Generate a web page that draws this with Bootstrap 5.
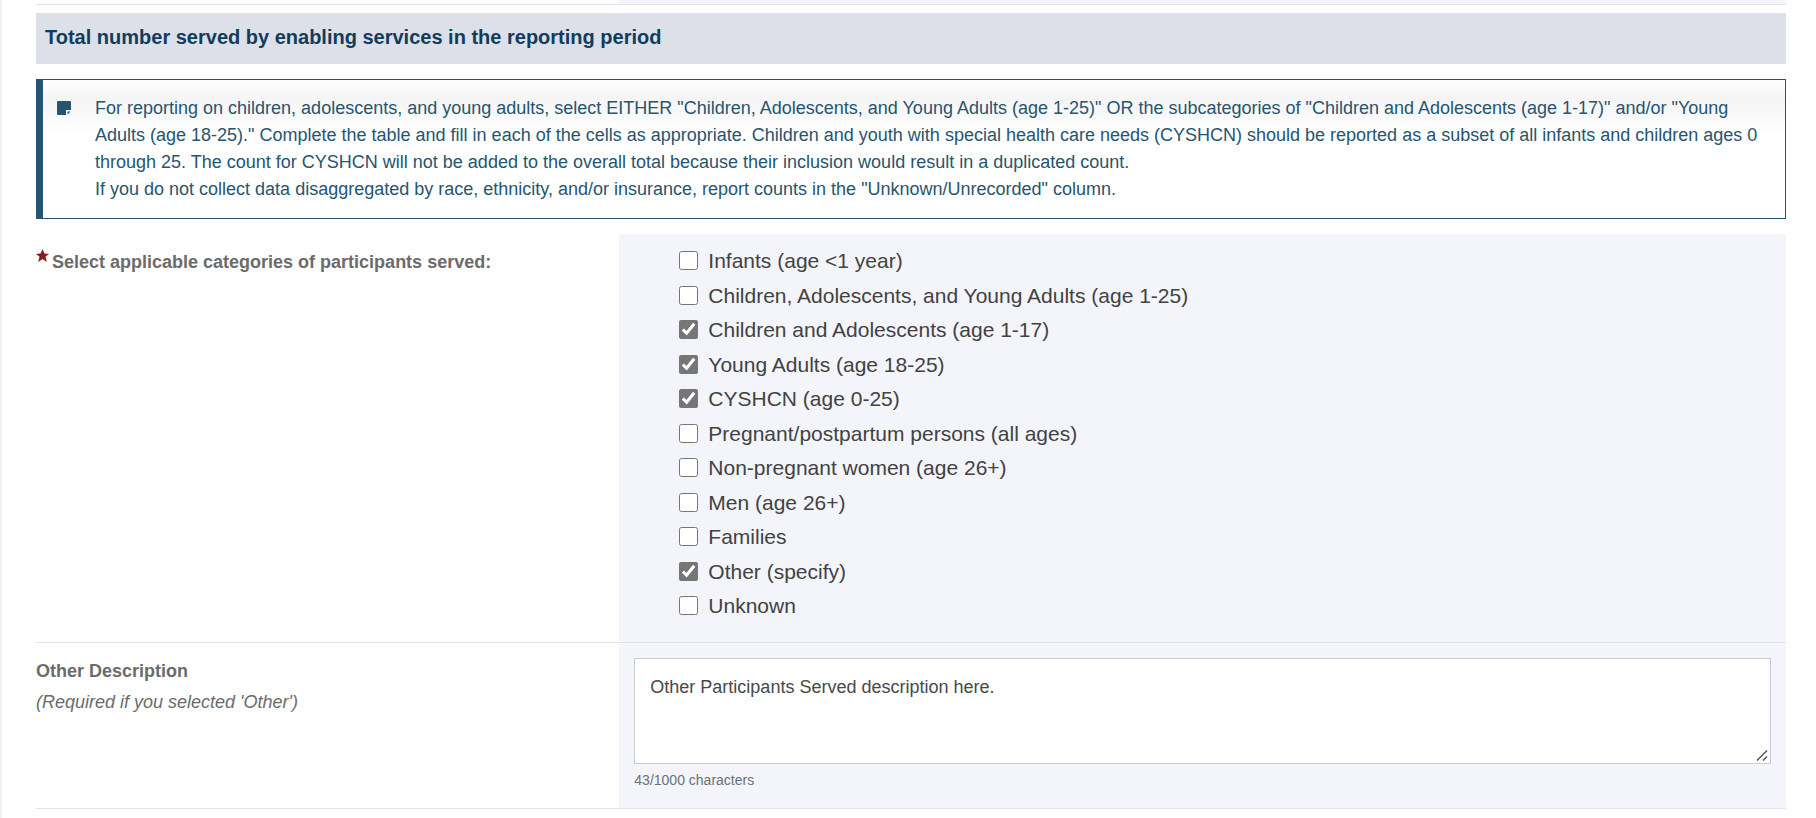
<!DOCTYPE html>
<html lang="en">
<head>
<meta charset="utf-8">
<meta name="viewport" content="width=device-width, initial-scale=1">
<title>Enabling services report</title>
<link href="https://cdn.jsdelivr.net/npm/bootstrap@5.3.0/dist/css/bootstrap.min.css" rel="stylesheet">
<style>
  body { font-family: "Liberation Sans", Arial, sans-serif; font-size: 18px; color: #6b6b6b; background: #fff; }
  .page-frame { border-left: 2px solid #edf1f7; min-height: 100vh; padding: 0 30px 0 34px; }
  .form-row { border-bottom: 1px solid #e2e3e5; }
  .field-cell { background: #f4f5fa; }
  .stub-row { height: 5px; }
  .section-title { background: #dde0e9; color: #103d5c; font-size: 20px; font-weight: 700; line-height: 27px; padding: 11px 9px 13px; margin: 8px 0 15px; }
  .note-box { border: 1px solid #26556f; border-left-width: 7px; color: #26556f; line-height: 27px; padding: 15px 24px 15px 14px; margin-bottom: 15px; background: linear-gradient(#fff, #f5f5f5 18px, #f8f8f8 32px, #fff 54px); }
  .note-icon { margin: 6px 24px 0 0; }
  .label-cell { padding-top: 15px; }
  .field-label { font-weight: 700; line-height: 27px; }
  .required-star { margin-right: 3px; }
  .choices { font-size: 21px; line-height: 1.5; color: #424242; padding: 11px 15px 17px 60px; }
  .choice { gap: 10px; margin-bottom: 3px; }
  .choice input { width: 19px; height: 19px; accent-color: #767676; margin: 0; }
  .desc-cell { padding: 15px 15px 18px; }
  .desc-box { height: 106px; border: 1px solid #c9ccd1; border-radius: 0; padding: 15px; line-height: 27px; font-size: 18px; color: #484848; }
  .desc-box::-webkit-resizer { background: #fff url("data:image/svg+xml,%3Csvg xmlns='http://www.w3.org/2000/svg' width='15' height='15'%3E%3Cpath d='M2 12.500L12 2.500M8 12.500L12 8.500' stroke='%23555' stroke-width='1.500'/%3E%3C/svg%3E") no-repeat right bottom; }
  .char-count { font-size: 14px; line-height: 20px; color: #6b7078; margin-top: 6px; }
</style>
</head>
<body>
<main class="page-frame">
  <div class="row g-0 form-row stub-row"><div class="col-4"></div><div class="col-8 field-cell"></div></div>
  <h2 class="section-title">Total number served by enabling services in the reporting period</h2>
  <div class="note-box d-flex align-items-start">
    <svg class="note-icon flex-shrink-0" width="14" height="14" viewBox="0 0 14 14" aria-hidden="true"><path fill="#26556f" d="M1 0h12q1 0 1 1v8H9v5H1q-1 0-1-1V1q0-1 1-1zM10.500 10.500H13.500L10.500 13.500z"/></svg>
    <div>For reporting on children, adolescents, and young adults, select EITHER "Children, Adolescents, and Young Adults (age 1-25)" OR the subcategories of "Children and Adolescents (age 1-17)" and/or "Young Adults (age 18-25)." Complete the table and fill in each of the cells as appropriate. Children and youth with special health care needs (CYSHCN) should be reported as a subset of all infants and children ages 0 through 25. The count for CYSHCN will not be added to the overall total because their inclusion would result in a duplicated count.<br>If you do not collect data disaggregated by race, ethnicity, and/or insurance, report counts in the "Unknown/Unrecorded" column.</div>
  </div>
  <form>
    <div class="row g-0 form-row" role="group" aria-labelledby="catLabel">
      <div class="col-4 d-flex align-items-start label-cell">
        <svg class="required-star flex-shrink-0" width="13" height="13" viewBox="0 0 24 24" aria-hidden="true"><path fill="#8b1a1a" d="M12 0l3.500 8.500 8.500.5-6.500 5.500L20 24l-8-5.500L4 24l2.500-9.500L0 9l8.500-.5z"/></svg>
        <div class="field-label" id="catLabel">Select applicable categories of participants served:</div>
      </div>
      <div class="col-8 field-cell choices">
        <div class="choice d-flex align-items-center"><input type="checkbox" id="c1"><label for="c1">Infants (age &lt;1 year)</label></div>
        <div class="choice d-flex align-items-center"><input type="checkbox" id="c2"><label for="c2">Children, Adolescents, and Young Adults (age 1-25)</label></div>
        <div class="choice d-flex align-items-center"><input type="checkbox" id="c3" checked><label for="c3">Children and Adolescents (age 1-17)</label></div>
        <div class="choice d-flex align-items-center"><input type="checkbox" id="c4" checked><label for="c4">Young Adults (age 18-25)</label></div>
        <div class="choice d-flex align-items-center"><input type="checkbox" id="c5" checked><label for="c5">CYSHCN (age 0-25)</label></div>
        <div class="choice d-flex align-items-center"><input type="checkbox" id="c6"><label for="c6">Pregnant/postpartum persons (all ages)</label></div>
        <div class="choice d-flex align-items-center"><input type="checkbox" id="c7"><label for="c7">Non-pregnant women (age 26+)</label></div>
        <div class="choice d-flex align-items-center"><input type="checkbox" id="c8"><label for="c8">Men (age 26+)</label></div>
        <div class="choice d-flex align-items-center"><input type="checkbox" id="c9"><label for="c9">Families</label></div>
        <div class="choice d-flex align-items-center"><input type="checkbox" id="c10" checked><label for="c10">Other (specify)</label></div>
        <div class="choice d-flex align-items-center"><input type="checkbox" id="c11"><label for="c11">Unknown</label></div>
      </div>
    </div>
    <div class="row g-0 form-row">
      <div class="col-4 label-cell">
        <label class="field-label d-block" for="otherDesc">Other Description</label>
        <em class="d-block mt-1" id="otherHint">(Required if you selected 'Other')</em>
      </div>
      <div class="col-8 field-cell desc-cell">
        <textarea class="form-control desc-box" id="otherDesc" aria-describedby="otherHint" maxlength="1000">Other Participants Served description here.</textarea>
        <div class="char-count">43/1000 characters</div>
      </div>
    </div>
  </form>
</main>
<script src="https://cdn.jsdelivr.net/npm/bootstrap@5.3.0/dist/js/bootstrap.bundle.min.js"></script>
</body>
</html>
